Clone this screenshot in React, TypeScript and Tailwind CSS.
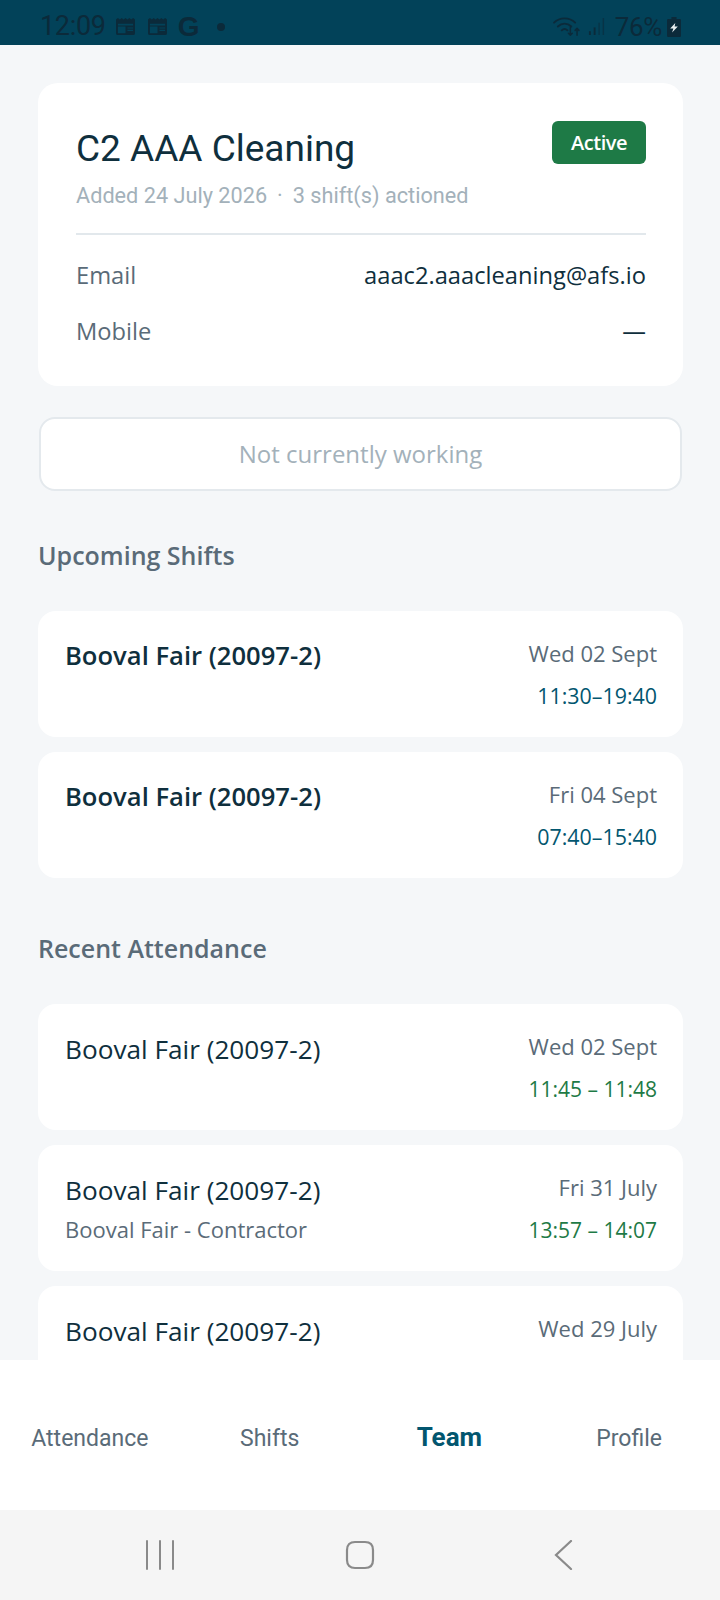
const openSans = "font-['Open_Sans',sans-serif]";
const roboto = "font-['Roboto',sans-serif]";

const upcoming = [
  { site: "Booval Fair (20097-2)", date: "Wed 02 Sept", time: "11:30–19:40" },
  { site: "Booval Fair (20097-2)", date: "Fri 04 Sept", time: "07:40–15:40" },
];

const attendance = [
  { site: "Booval Fair (20097-2)", date: "Wed 02 Sept", time: "11:45 – 11:48" },
  { site: "Booval Fair (20097-2)", sub: "Booval Fair - Contractor", date: "Fri 31 July", time: "13:57 – 14:07" },
  { site: "Booval Fair (20097-2)", date: "Wed 29 July", time: "" },
];

function NewsIcon() {
  return (
    <svg viewBox="0 0 22 20" className="h-[19px] w-[21px]" fill="#0b2a3a">
      <path d="M1 2.5 3 1l2 1.5L7 1l2 1.5L11 1l2 1.5L15 1l2 1.5L19 1l2 1.5V17a2 2 0 0 1-2 2H3a2 2 0 0 1-2-2Z" />
      <path d="M3 7h16v2H3zM3 10h8v7H3zM13 11h6v1.2h-6zM13 13.5h6v1.2h-6z" fill="#024259" />
    </svg>
  );
}

function StatusBar() {
  return (
    <div className="flex h-[45px] shrink-0 items-center bg-[#024259] pl-[40px] pr-[39px] pt-[8px] text-[#0b2a3a]">
      <span className={`${roboto} text-[27px] font-normal leading-none tracking-[-0.3px]`}>12:09</span>
      <div className="ml-[9px] flex items-center gap-[11px]">
        <NewsIcon />
        <NewsIcon />
      </div>
      <span className="ml-[10px] font-['Liberation_Sans',sans-serif] text-[28px] font-bold leading-none">G</span>
      <span className="ml-[17px] h-[8px] w-[8px] rounded-full bg-[#0b2a3a]" />
      <div className="ml-auto flex items-center">
        <svg viewBox="0 0 30 24" className="h-[23px] w-[29px]" fill="none" stroke="#0b2a3a" strokeWidth="2" strokeLinecap="round">
          <path d="M2 8c6-6 16-6 22 0M6 12c4-4 10-4 14 0M10 16c2-2 4-2 6 0" />
          <path d="M19 13v8M19 21l-2-2M19 21l2-2M26 21v-7M26 14l-2 2M26 14l2 2" strokeWidth="1.6" />
        </svg>
        <svg viewBox="0 0 18 20" className="ml-[7px] h-[19px] w-[17px]" fill="#0b2a3a">
          <rect x="1" y="15" width="2" height="4" />
          <rect x="6" y="11" width="2" height="8" />
          <rect x="11" y="6" width="1.5" height="13" opacity="0.6" />
          <rect x="15.5" y="1" width="1.5" height="18" opacity="0.6" />
        </svg>
        <span className={`${roboto} ml-[10px] text-[26px] font-normal leading-none tracking-[-0.3px]`}>76%</span>
        <svg viewBox="0 0 11 20" className="ml-[5px] h-[20px] w-[14px]" preserveAspectRatio="none">
          <path d="M3.5 0h4v2h2.5a1 1 0 0 1 1 1v16a1 1 0 0 1-1 1H1a1 1 0 0 1-1-1V3a1 1 0 0 1 1-1h2.500Z" fill="#0b2a3a" />
          <path d="M6.500 6 2.500 11.500h2.500L4 15.500l4.500-6H6Z" fill="#e8eef0" />
        </svg>
      </div>
    </div>
  );
}

function ProfileCard() {
  return (
    <div className="ml-[38px] mr-[37px] mt-[38px] rounded-[20px] bg-white pb-[40px] pl-[38px] pr-[37px] pt-[38px]">
      <div className="flex items-start justify-between">
        <h1 className={`${roboto} mb-[-1px] mt-[7px] text-[37px] leading-[42px] text-[#0f2f3d]`}>C2 AAA Cleaning</h1>
        <span className={`${openSans} flex h-[43px] w-[94px] items-center justify-center rounded-[6px] bg-[#1e7a46] text-[20px] font-semibold tracking-[-0.5px] text-white`}>
          Active
        </span>
      </div>
      <p className={`${roboto} mt-[14px] text-[21.700px] leading-[26px] text-[#a3b1ba]`}>
        Added 24 July 2026<span className="mx-[10px]">·</span>3 shift(s) actioned
      </p>
      <div className="mt-[24px] h-[2px] bg-[#e2e8ec]" />
      <div className={`${openSans} mt-[25px] flex items-center justify-between text-[23.700px] leading-[30px]`}>
        <span className="text-[#5a6b78]">Email</span>
        <span className="text-[#0f2f3d]">aaac2.aaacleaning@afs.io</span>
      </div>
      <div className={`${openSans} mt-[26px] flex items-center justify-between text-[23.700px] leading-[30px]`}>
        <span className="text-[#5a6b78]">Mobile</span>
        <span className="text-[#0f2f3d]">—</span>
      </div>
    </div>
  );
}

function ShiftCard({ site, sub, date, time, bold, timeColor }: { site: string; sub?: string; date: string; time: string; bold?: boolean; timeColor: string }) {
  return (
    <div className={`${openSans} flex h-[126px] shrink-0 justify-between rounded-[18px] bg-white pl-[27px] pr-[26px] pt-[27px]`}>
      <div className="pt-[1px]">
        <p className={`leading-[34px] text-[#0f2f3d] ${bold ? "text-[25.600px] font-semibold" : "text-[26.200px]"}`}>{site}</p>
        {sub && <p className="mt-[7px] text-[22px] leading-[30px] text-[#5a6b78]">{sub}</p>}
      </div>
      <div className="text-right">
        <p className="text-[22px] leading-[30px] text-[#5a6b78]">{date}</p>
        <p className={`mt-[13px] leading-[30px] ${timeColor}`}>{time}</p>
      </div>
    </div>
  );
}

function SectionTitle({ children }: { children: string }) {
  return <h2 className={`${openSans} ml-[38px] text-[25px] font-semibold leading-[34px] text-[#5a6b78]`}>{children}</h2>;
}

function TabBar() {
  const tabs = ["Attendance", "Shifts", "Team", "Profile"];
  return (
    <div className="grid h-[150px] shrink-0 grid-cols-4 items-baseline bg-white pr-[1px] pt-[62px]">
      {tabs.map((t) => (
        <span
          key={t}
          className={`${roboto} text-center leading-[30px] ${t === "Team" ? "text-[26px] font-bold text-[#02566f]" : "text-[23px] text-[#5a6b78]"}`}
        >
          {t}
        </span>
      ))}
    </div>
  );
}

function NavBar() {
  return (
    <div className="flex h-[90px] shrink-0 items-center justify-center gap-[170px] bg-[#f5f5f5]">
      <svg viewBox="0 0 30 30" className="h-[30px] w-[30px]" stroke="#8a8a8a" strokeWidth="2" strokeLinecap="round">
        <path d="M2 1v28M15 1v28M28 1v28" />
      </svg>
      <svg viewBox="0 0 30 30" className="h-[30px] w-[30px]" fill="none" stroke="#8a8a8a" strokeWidth="2.200">
        <path d="M10 2h10c5 0 8 3 8 8v10c0 5-3 8-8 8H10c-5 0-8-3-8-8V10c0-5 3-8 8-8Z" />
      </svg>
      <svg viewBox="0 0 30 30" className="h-[30px] w-[30px]" fill="none" stroke="#8a8a8a" strokeWidth="2.200" strokeLinecap="round">
        <path d="M26 1 11 15l15 14" />
      </svg>
    </div>
  );
}

export default function App() {
  return (
    <div className="flex h-[1600px] w-[720px] flex-col overflow-hidden bg-[#f5f7f9]">
      <StatusBar />
      <main className="min-h-0 flex-1 overflow-hidden">
        <ProfileCard />
        <div className={`${openSans} ml-[39px] mr-[38px] mt-[31px] flex h-[74px] items-center justify-center rounded-[16px] border-2 border-[#e4e9ed] bg-white text-[24px] text-[#a3b1ba]`}>
          Not currently working
        </div>
        <div className="mt-[47px]">
          <SectionTitle>Upcoming Shifts</SectionTitle>
        </div>
        <div className="ml-[38px] mr-[37px] mt-[39px] flex flex-col gap-[15px]">
          {upcoming.map((s) => (
            <ShiftCard key={s.date} {...s} bold timeColor="text-[21.400px] text-[#02566f]" />
          ))}
        </div>
        <div className="mt-[53px]">
          <SectionTitle>Recent Attendance</SectionTitle>
        </div>
        <div className="ml-[38px] mr-[37px] mt-[39px] flex flex-col gap-[15px]">
          {attendance.map((s) => (
            <ShiftCard key={s.date} {...s} timeColor="text-[21px] text-[#1e7a46]" />
          ))}
        </div>
      </main>
      <TabBar />
      <NavBar />
    </div>
  );
}
